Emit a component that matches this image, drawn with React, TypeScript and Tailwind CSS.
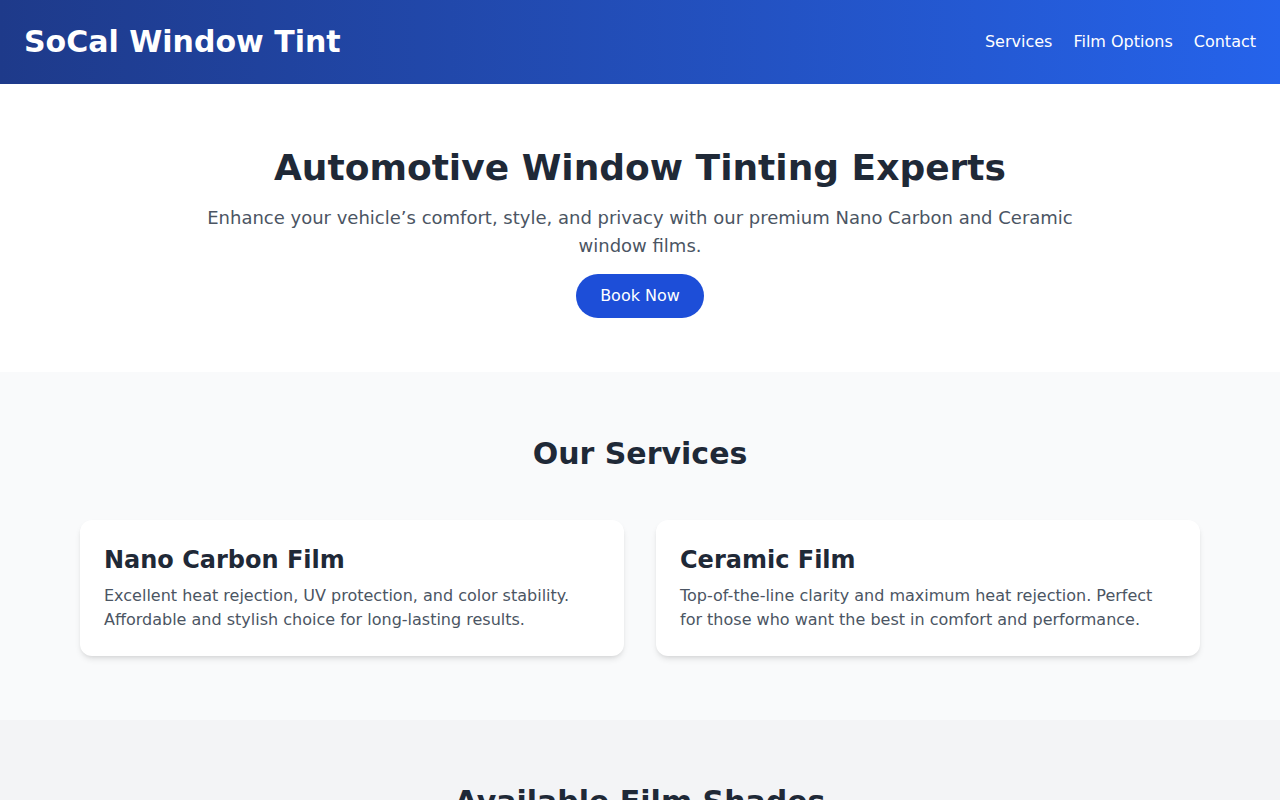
import React from "react";

export default function App() {
  return (
    <div className="min-h-screen bg-white text-[#1f2937]" style={{ fontFamily: '"DejaVu Sans", sans-serif' }}>
      <header className="bg-gradient-to-r from-[#1e3a8a] to-[#2563eb] text-white">
        <div className="flex items-center justify-between px-6 py-6">
          <h1 className="text-3xl font-bold leading-9">SoCal Window Tint</h1>
          <nav className="flex gap-[21px] text-base">
            <a href="#services">Services</a>
            <a href="#films">Film Options</a>
            <a href="#contact">Contact</a>
          </nav>
        </div>
      </header>

      <section className="bg-white pt-16 pb-[54px] text-center px-4">
        <h2 className="text-4xl font-bold leading-10 text-[#1f2937]">Automotive Window Tinting Experts</h2>
        <p className="mx-auto mt-4 max-w-4xl text-lg leading-7 text-[#4b5563]">
          Enhance your vehicle’s comfort, style, and privacy with our premium Nano Carbon and Ceramic window films.
        </p>
        <button className="mt-[14px] rounded-full bg-[#1d4ed8] px-6 py-2.5 text-base leading-6 text-white">
          Book Now
        </button>
      </section>

      <section id="services" className="bg-[#f9fafb] py-16">
        <div className="mx-auto max-w-6xl px-4">
          <h2 className="mb-12 text-center text-3xl font-bold leading-9 text-[#1f2937]">Our Services</h2>
          <div className="grid grid-cols-2 gap-8">
            <div className="rounded-xl bg-white p-6 shadow-md">
              <h3 className="mb-2 text-2xl font-bold leading-8 text-[#1f2937]">Nano Carbon Film</h3>
              <p className="text-base leading-6 text-[#4b5563]">
                Excellent heat rejection, UV protection, and color stability. Affordable and stylish choice for long-lasting results.
              </p>
            </div>
            <div className="rounded-xl bg-white p-6 shadow-md">
              <h3 className="mb-2 text-2xl font-bold leading-8 text-[#1f2937]">Ceramic Film</h3>
              <p className="text-base leading-6 text-[#4b5563]">
                Top-of-the-line clarity and maximum heat rejection. Perfect for those who want the best in comfort and performance.
              </p>
            </div>
          </div>
        </div>
      </section>

      <section id="films" className="bg-[#f3f4f6] py-16">
        <div className="mx-auto max-w-6xl px-4">
          <h2 className="mb-12 text-center text-3xl font-bold leading-9 text-[#1f2937]">Available Film Shades</h2>
          <div className="grid grid-cols-4 gap-6">
            {["5%", "20%", "35%", "50%"].map((s) => (
              <div key={s} className="rounded-xl bg-white p-6 text-center shadow-md">
                <div className="text-2xl font-bold">{s}</div>
                <div className="text-[#4b5563]">VLT</div>
              </div>
            ))}
          </div>
        </div>
      </section>
    </div>
  );
}
